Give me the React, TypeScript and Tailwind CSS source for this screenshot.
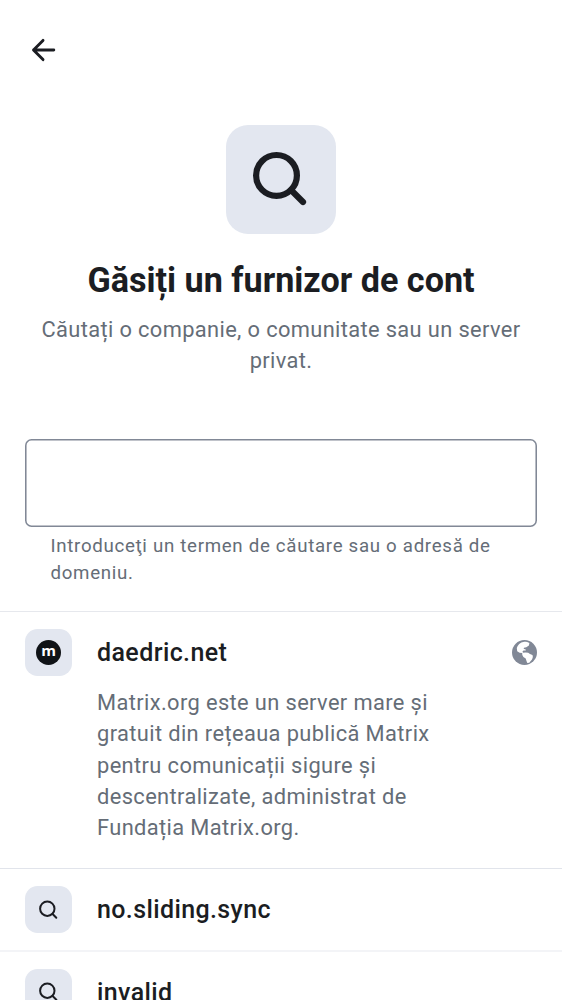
import React from "react";

function Tile({ children }: { children: React.ReactNode }) {
  return (
    <div className="flex h-[47px] w-[47px] shrink-0 items-center justify-center rounded-[12.5px] bg-[#e3e7f0] text-[#1b1d22]">
      {children}
    </div>
  );
}

function Row({ name, className }: { name: string; className: string }) {
  return (
    <div className={`flex h-[82px] shrink-0 items-start gap-[25px] pl-[25px] ${className}`}>
      <Tile>
        <svg className="h-[20px] w-[20px]" viewBox="0 0 20 20" fill="none" stroke="currentColor" strokeWidth="2" strokeLinecap="round">
          <circle cx="8.3" cy="8.7" r="7.2" />
          <path d="M13.6 14 17.3 17.7" />
        </svg>
      </Tile>
      <div className="text-[25px] leading-[47px] font-medium tracking-[0.38px] text-[#1b1d22]">{name}</div>
    </div>
  );
}

export default function App() {
  return (
    <div className="flex h-[1000px] w-[562px] flex-col overflow-hidden bg-white font-['Roboto',sans-serif] text-[#1b1d22]">
      <header className="flex h-[100px] shrink-0 items-center pl-[31px]">
        <svg className="h-[24px] w-[25px]" viewBox="0 0 25 24" fill="none" stroke="currentColor" strokeWidth="2.9" strokeLinecap="round" strokeLinejoin="round">
          <path d="M22.8 12H2.6M12 2.4 2.5 12l9.5 9.6" />
        </svg>
      </header>

      <section className="flex h-[339px] shrink-0 flex-col items-center pt-[25px]">
        <div className="flex h-[109.3px] w-[109.3px] shrink-0 items-center justify-center rounded-[22px] bg-[#e3e7f0]">
          <svg className="h-[54px] w-[54px] overflow-visible" viewBox="0 0 54 54" fill="none" stroke="currentColor" strokeWidth="6.2" strokeLinecap="round">
            <circle cx="22.5" cy="22.4" r="20.4" />
            <path d="M37 37 49 49" />
          </svg>
        </div>
        <h1 className="mt-[24.2px] text-[34.15px] leading-[44px] font-bold whitespace-nowrap">Găsiți un furnizor de cont</h1>
        <p className="mt-[12px] text-center text-[21.85px] leading-[31px] tracking-[0.36px] text-[#656d77]">
          Căutați o companie, o comunitate sau un server
          <br />
          privat.
        </p>
      </section>

      <section className="h-[172px] shrink-0 px-[25px]">
        <input
          aria-label="Server"
          className="block h-[87.5px] w-full rounded-[6.5px] shadow-[inset_0_0_0_1.56px_#818896] outline-none"
        />
        <p className="pt-[6.5px] pl-[25.5px] text-[18.7px] leading-[26.6px] tracking-[0.69px] text-[#656d77]">
          Introduceţi un termen de căutare sau o adresă de
          <br />
          domeniu.
        </p>
      </section>

      <div className="h-[257px] shrink-0 border-t border-[#e6e8ed] px-[25px] pt-[17px]">
        <div className="flex items-center">
          <Tile>
            <div className="flex h-[25px] w-[25px] items-center justify-center rounded-full bg-[#101317] pb-[4px] font-['Open_Sans',sans-serif] text-[15px] leading-none font-bold text-white">
              m
            </div>
          </Tile>
          <div className="ml-[25px] flex-1 text-[25px] font-medium tracking-[0.4px]">daedric.net</div>
          <svg className="h-[25px] w-[25px]" viewBox="0 0 25 25">
            <circle cx="12.5" cy="12.5" r="12.5" fill="#818896" />
            <path
              fill="#fff"
              d="M4.8 8C5.5 5 8 2.3 12.2 1.7c2 0 4 .4 5.2 1.2l-.5 2.6-2.6 1.8-2.3.4-.3 1.3 1.8.2.3 1.3h-2.3l-1 1 .5 1.2 2.5-.3 2.7.3 1.8 1.4 2.4 1c.8 1.4.4 3-.4 4.4l-2.7 3.2-2 .3-.8-2.1-.8-2.3-2.3-1.6-1.1-2-.1-2.1-2.6-.2-2.4-1.4z"
            />
          </svg>
        </div>
        <p className="mt-[11px] pl-[72px] text-[21.85px] leading-[31.25px] tracking-[0.38px] text-[#656d77]">
          Matrix.org este un server mare și
          <br />
          gratuit din rețeaua publică Matrix
          <br />
          pentru comunicații sigure și
          <br />
          descentralizate, administrat de
          <br />
          Fundația Matrix.org.
        </p>
      </div>
      <Row name="no.sliding.sync" className="border-t border-[#e1e4eb] pt-[17.3px]" />
      <Row name="invalid" className="border-t-2 border-[#f3f4f7] pt-[16.6px]" />
    </div>
  );
}
